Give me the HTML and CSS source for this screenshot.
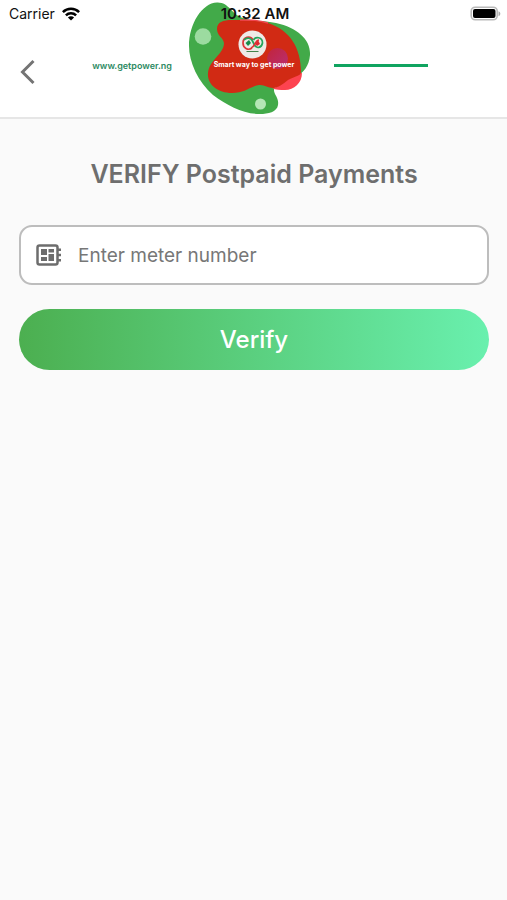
FILE: index.html
```html
<!DOCTYPE html>
<html lang="en">
<head>
<meta charset="utf-8">
<meta name="viewport" content="width=device-width, initial-scale=1">
<title>Verify Postpaid Payments</title>
<link rel="stylesheet" href="styles.css">
</head>
<body>
<header class="header">
  <div class="status">
    <div class="carrier">
      <span>Carrier</span>
      <svg class="wifi" viewBox="0 0 18 14" aria-hidden="true">
        <g fill="none" stroke="#000" stroke-width="2.5"><path d="M.9 5.1a11.4 11.4 0 0 1 16.2 0"/><path d="M3.9 8.4a7.2 7.2 0 0 1 10.2 0"/></g>
        <path d="M9 13.6 5.9 10.6a4.4 4.4 0 0 1 6.2 0Z"/>
      </svg>
    </div>
    <time class="clock">10:32 AM</time>
    <svg class="battery" viewBox="0 0 32 16" role="img" aria-label="Battery full">
      <rect x="2.200" y="1.200" width="26" height="12.600" rx="4" fill="#fff" stroke="#b9b9b9" stroke-width="1.600"/>
      <rect x="4" y="3" width="22.500" height="9" rx="2"/>
      <path d="M29.500 5.200c2.400 1 2.400 4 0 5Z" fill="#aaa"/>
    </svg>
  </div>
  <nav class="banner">
    <button class="back" type="button" aria-label="Back">
      <svg viewBox="0 0 16 26" aria-hidden="true"><path d="M13.500 2 2.500 13l11 11" fill="none" stroke="#747474" stroke-width="3"/></svg>
    </button>
    <a class="site" href="#">www.getpower.ng</a>
    <svg class="logo" viewBox="189 0 129 117" role="img" aria-label="Smart way to get power">
      <defs>
        <linearGradient id="bubble" x1="0" y1="0" x2="1" y2="1">
          <stop offset="0" stop-color="#c2243a"/>
          <stop offset="1" stop-color="#b92f74"/>
        </linearGradient>
      </defs>
      <path fill="#42aa49" d="M217 2.500C229 2 231 14 243 18C253 22 262 20 276 23C298 28 311 40 310 55C309 66 304 72 295 78C284 84 274 82 274 91C275 96 279 98 278 105C277 112 268 114 260 114C243 114 228 106 213 95C198 82 189 62 189 46C189 24 202 3 217 2.500Z"/>
      <path fill="#fd4350" d="M272 88c10 0 14-15 30-15 0 10-8 17-17 17-5 0-9 0-13-2Z"/>
      <path fill="#d12a14" d="M268 23C290 30 301 48 301 72C301 76 295 76 288 80C283 84 278 88 273 88C266 88 264 83 255 86C247 89 243 93 232 93C217 93 207 84 208 73C209 60 224 54 224 43C223 37 217 36 217 29C217 22 223 20 232 20C245 20 258 20 268 23Z"/>
      <path fill="none" stroke="#ef4650" stroke-width="1.500" d="M240 20c13 0 18 0 28 3"/>
      <circle cx="203" cy="36.500" r="8.300" fill="#9cdba0"/>
      <circle cx="260.500" cy="104" r="5.500" fill="#b5e6b6"/>
      <circle cx="277.500" cy="58.500" r="10.500" fill="url(#bubble)"/>
      <circle cx="252.500" cy="44.500" r="14" fill="#eee9e7"/>
      <g fill="none" stroke-width="1.700">
        <path stroke="#df3438" d="M252 48c-4 3-9 0-9-5 0-6 7-8 10-3"/>
        <path stroke="#24a45b" d="M244 40c3-3 7-2 8.500 1l2 4c2 4 7 3 8-2 0-6-7-7-9-3"/>
        <path stroke="#df3438" d="M251 48c4-1 4-8 8-8"/>
      </g>
      <path fill="#168c49" d="m245.500 43 3.500-3 2 3-3 3Z"/>
      <path fill="#df2932" d="m255 44 3-4 2 4-3 2Z"/>
      <path stroke="#43834c" d="M246.500 51.500h12"/>
      <text class="slogan" x="254" y="67" text-anchor="middle">Smart way to get power</text>
    </svg>
    <div class="rule"></div>
  </nav>
</header>
<main class="content">
  <h1 class="title">VERIFY Postpaid Payments</h1>
  <form class="form">
    <label class="field">
      <svg class="meter" viewBox="0 0 26 24" aria-hidden="true">
        <rect x="1.500" y="2.500" width="20" height="19" rx="2" fill="none" stroke="#6d6d6d" stroke-width="2.500"/>
        <path fill="#6d6d6d" d="M5 6h6v6H5zM12.500 6H18v3.500h-5.500zM5 14h6v4H5zM12.500 11H18v7h-5.500zM22 5.500h3V8h-3zM22 10.700h3v2.500h-3zM22 16h3v2.500h-3z"/>
      </svg>
      <input class="input" type="text" inputmode="numeric" placeholder="Enter meter number" aria-label="Enter meter number">
    </label>
    <button class="submit" type="button">Verify</button>
  </form>
</main>
</body>
</html>
```
FILE: styles.css
```css
* { box-sizing: border-box; }

body {
  margin: 0;
  min-height: 100vh;
  background: #fafafa;
  color: #6e6e6e;
  font-family: Inter, "Liberation Sans", sans-serif;
}

.header {
  position: relative;
  background: #fff;
  border-bottom: 2px solid #e6e6e6;
}

/* The status bar lies over the top of the banner. */
.status {
  position: absolute;
  inset: 0 0 auto;
  z-index: 1;
  display: grid;
  grid-template-columns: 1fr auto 1fr;
  align-items: center;
  height: 27px;
  padding: 0 6px 0 9px;
  color: #111;
  font-size: 14px;
}

.carrier { display: flex; align-items: center; gap: 7px; }
.wifi { width: 18px; height: 14px; }
.clock { font-size: 15px; font-weight: 600; }
.battery { width: 32px; height: 16px; justify-self: end; }

.banner {
  display: grid;
  grid-template-columns: 56px 1fr 129px 1fr 56px;
  align-items: center;
}

.back {
  display: flex;
  justify-content: center;
  padding: 28px 0 2px;
  border: 0;
  background: none;
}

.back svg { width: 16px; height: 26px; }

.site {
  justify-self: end;
  padding: 14px 17px 0 0;
  color: #2d8a63;
  font-size: 9px;
  font-weight: 600;
  text-decoration: none;
}

.logo { display: block; width: 100%; }
.slogan { fill: #fff; font-size: 7px; font-weight: 700; }

.rule {
  height: 3px;
  margin: 14px 23px 0 16px;
  background: #10a460;
}

.content { padding: 40px 18px 40px 19px; }

.title {
  margin: 0 0 36px;
  font-size: 25px;
  font-weight: 600;
  line-height: 30px;
  text-align: center;
}

.form { display: grid; gap: 24px; }

.field {
  display: flex;
  align-items: center;
  gap: 16px;
  height: 60px;
  padding: 0 15px;
  border: 2px solid #bdbdbd;
  border-radius: 13px;
  background: #fff;
}

.meter { flex: none; width: 26px; height: 24px; }

.input {
  flex: 1;
  min-width: 0;
  padding: 0;
  border: 0;
  outline: 0;
  background: none;
  color: #333;
  font: inherit;
  font-size: 19px;
}

.input::placeholder { color: #777; opacity: 1; }

.submit {
  height: 61px;
  border: 0;
  border-radius: 31px;
  background: linear-gradient(90deg, #4caf50, #69f0ae);
  color: #fff;
  font: inherit;
  font-size: 24px;
  font-weight: 500;
}
```
